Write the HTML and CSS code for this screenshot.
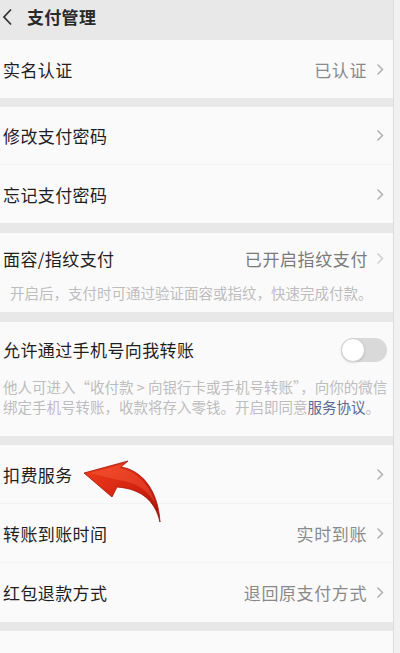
FILE: index.html
```html
<!DOCTYPE html>
<html lang="zh-CN">
<head>
<meta charset="utf-8">
<title>支付管理</title>
<link rel="stylesheet" href="styles.css">
</head>
<body>
<div class="screen">
  <div class="main">
    <header class="topbar">
      <svg class="back" width="11" height="18" viewBox="0 0 11 18"><polyline points="9,1.5 2,9 9,16.5" fill="none" stroke="#333" stroke-width="1.8"/></svg>
      <span class="title">支付管理</span>
    </header>

    <section class="group">
      <div class="row"><span class="label">实名认证</span><span class="value">已认证</span><svg class="chev" width="8" height="13" viewBox="0 0 8 13"><polyline points="1.5,1.5 6.5,6.5 1.5,11.5" fill="none" stroke="#aaa" stroke-width="1.4"/></svg></div>
    </section>
    <div class="sep s9"></div>

    <section class="group">
      <div class="row line"><span class="label">修改支付密码</span><svg class="chev" width="8" height="13" viewBox="0 0 8 13"><polyline points="1.5,1.5 6.5,6.5 1.5,11.5" fill="none" stroke="#aaa" stroke-width="1.4"/></svg></div>
      <div class="row"><span class="label">忘记支付密码</span><svg class="chev" width="8" height="13" viewBox="0 0 8 13"><polyline points="1.5,1.5 6.5,6.5 1.5,11.5" fill="none" stroke="#aaa" stroke-width="1.4"/></svg></div>
    </section>
    <div class="sep s10"></div>

    <section class="group face">
      <div class="row head50"><span class="label">面容/指纹支付</span><span class="value">已开启指纹支付</span><svg class="chev" width="8" height="13" viewBox="0 0 8 13"><polyline points="1.5,1.5 6.5,6.5 1.5,11.5" fill="none" stroke="#ccc" stroke-width="1.4"/></svg></div>
      <p class="note indent">开启后，支付时可通过验证面容或指纹，快速完成付款。</p>
    </section>
    <div class="sep s10"></div>

    <section class="group phone">
      <div class="row head55"><span class="label">允许通过手机号向我转账</span><span class="toggle"><span class="knob"></span></span></div>
      <p class="note">他人可进入“收付款 &gt; 向银行卡或手机号转账”，向你的微信<br>绑定手机号转账，收款将存入零钱。开启即同意<span class="link">服务协议</span>。</p>
    </section>
    <div class="sep s9"></div>

    <section class="group">
      <div class="row r59 line"><span class="label">扣费服务</span><svg class="chev" width="8" height="13" viewBox="0 0 8 13"><polyline points="1.5,1.5 6.5,6.5 1.5,11.5" fill="none" stroke="#aaa" stroke-width="1.4"/></svg></div>
      <div class="row r59 line"><span class="label">转账到账时间</span><span class="value">实时到账</span><svg class="chev" width="8" height="13" viewBox="0 0 8 13"><polyline points="1.5,1.5 6.5,6.5 1.5,11.5" fill="none" stroke="#aaa" stroke-width="1.4"/></svg></div>
      <div class="row r59"><span class="label">红包退款方式</span><span class="value">退回原支付方式</span><svg class="chev" width="8" height="13" viewBox="0 0 8 13"><polyline points="1.5,1.5 6.5,6.5 1.5,11.5" fill="none" stroke="#aaa" stroke-width="1.4"/></svg></div>
    </section>
    <div class="sep s9"></div>
    <section class="group rest"></section>

    <svg class="pointer" width="90" height="70" viewBox="80 455 90 70">
      <defs>
        <linearGradient id="rg" x1="0" y1="0" x2="1" y2="1">
          <stop offset="0" stop-color="#f0401e"/>
          <stop offset="0.6" stop-color="#d2200e"/>
          <stop offset="1" stop-color="#9a1208"/>
        </linearGradient>
      </defs>
      <path d="M84,473 L128,461 L121,467 C141,470 158,489 160,522 C155,501 142,489 117,487 L112,497 Z" fill="url(#rg)" stroke="#a01408" stroke-width="0.8" stroke-linejoin="round"/>
      <path d="M90,473 L124,464 L119,468 C136,471 150,484 156,505 C148,490 136,482 118,480 Z" fill="#ff6a48" opacity="0.35"/>
    </svg>
  </div>
  <div class="edge"></div>
</div>
</body>
</html>
```
FILE: styles.css
```css
* { box-sizing: border-box; }
html, body { margin: 0; padding: 0; }
body {
  width: 400px;
  height: 653px;
  overflow: hidden;
  background: #fbfafb;
  font-family: "Noto Sans CJK SC", "Noto Sans", sans-serif;
  color: #262626;
}
.screen { display: flex; width: 400px; height: 653px; }
.main { position: relative; width: 393px; display: flex; flex-direction: column; }
.edge { width: 7px; background: #f1f1f1; border-left: 1px solid #dcdcdc; }

.topbar {
  height: 40px;
  background: #e8e8e8;
  display: flex;
  align-items: center;
  padding-left: 2px;
  gap: 14px;
  padding-bottom: 7px;
}
.back { display: block; }
.title { font-size: 17px; font-weight: 700; color: #2a2a2a; letter-spacing: 0.3px; }

.group { background: #fbfafb; }
.rest { flex: 1; }
.sep { background: #e8e8e8; }
.s9 { height: 9px; }
.s10 { height: 10px; }

.row {
  height: 58px;
  display: flex;
  align-items: center;
  padding: 0 9px 0 3px;
}
.r59 { height: 59px; }
.head50 { height: 50px; }
.head55 { height: 55px; padding-right: 6px; }
.row.line { border-bottom: 1px solid #f4f3f4; }

.label { font-size: 17px; color: #1f1f1f; letter-spacing: 0.4px; flex: 1; font-weight: 400; }
.value { font-size: 17px; color: #8a8a8a; letter-spacing: 0.6px; margin-right: 9px; }
.face .value { color: #7a7a7a; margin-right: 8px; }
.chev { display: block; }

.note {
  margin: 0;
  padding: 0 0 0 3px;
  font-size: 14.5px;
  line-height: 20px;
  color: #bdbdbd;
  letter-spacing: 0;
  white-space: nowrap;
}
.note.indent { padding-left: 10px; }
.face { padding-bottom: 9px; }
.phone { padding-bottom: 19px; }
.link { color: #5a6a95; }

.toggle {
  width: 46px;
  height: 24px;
  border-radius: 12px;
  background: #d9d9d9;
  position: relative;
  display: block;
}
.knob {
  position: absolute;
  left: 0;
  top: 0;
  width: 24px;
  height: 24px;
  border-radius: 50%;
  background: #ffffff;
  border: 1px solid #cfcfcf;
  box-shadow: 0 1px 2px rgba(0,0,0,0.12);
}

.pointer { position: absolute; left: 80px; top: 455px; }
```
